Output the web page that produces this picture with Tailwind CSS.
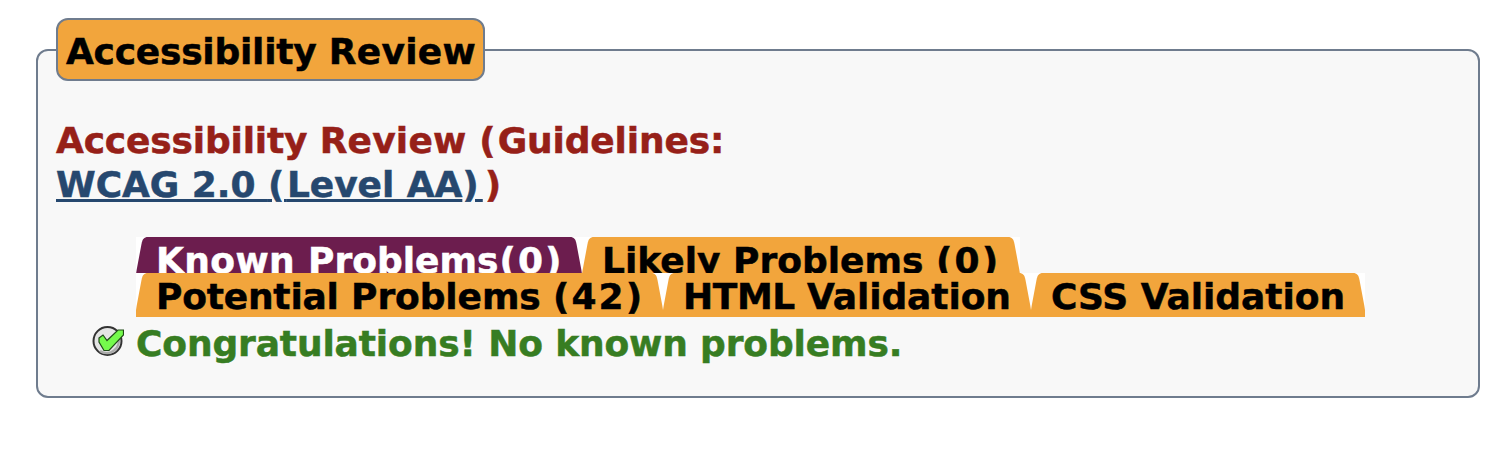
<!DOCTYPE html>
<html lang="en"><head><meta charset="utf-8"><title>Accessibility Review</title>
<script src="https://cdn.jsdelivr.net/npm/@tailwindcss/browser@4"></script></head>
<body class="bg-white font-['DejaVu_Sans',sans-serif] font-bold text-[36px] leading-[44px] [-webkit-text-stroke:0.5px] overflow-hidden whitespace-nowrap h-[454px] pt-[18px] pl-9 pr-1.5">
<svg class="hidden">
  <symbol id="edge" viewBox="0 0 12 44"><path d="M12 0C8 0 6.500 2 5.500 7L.8 32L0 37V44H12Z"/></symbol>
  <symbol id="edge-end" viewBox="0 0 12 44"><path d="M0 0C4 0 5.500 2 6.500 7L11.200 32L12 37V44H0Z"/></symbol>
</svg>
<fieldset class="h-[380px] border-2 border-[#6f7c8e] rounded-xl bg-[#f8f8f8] px-[18px]">
  <legend class="h-[63px] w-[429px] border-2 border-[#6f7c8e] rounded-xl bg-[#f2a53c] text-black pl-2 pt-[10px]"><span class="tracking-[-0.24px]">Accessibility </span><span class="tracking-[0.25px]">Review</span></legend>
  <h2 class="mt-[38px] text-[#962018]"><span class="tracking-[-0.18px]">Accessibility </span><span class="tracking-[0.2px]">Review </span><span class="tracking-[2px]">(</span><span class="tracking-[-0.15px]">Guidelines:</span><br><a href="#" class="text-[#26486f] underline decoration-[3px] underline-offset-[2px] tracking-[-0.05px]">WCAG 2.0 <span class="tracking-[2.5px]">(</span>Level AA<span class="tracking-[4px]">)</span></a><span class="pl-0.5">)</span></h2>
  <ul class="ml-20 mt-[30px] text-black">
    <li class="flex h-9 overflow-hidden">
      <div class="flex h-11 w-[446px] bg-white text-white"><svg class="w-3 h-11 fill-[#6c1d4e]"><use href="#edge"/></svg><span class="bg-[#6c1d4e] w-[422px] pl-[8px] pt-0.5"><span class="tracking-[0.4px]">Known </span>Problems<span class="tracking-[2px] pl-px">(0)</span></span><svg class="w-3 h-11 fill-[#6c1d4e]"><use href="#edge-end"/></svg></div>
      <div class="flex h-11 w-[438px] bg-white"><svg class="w-3 h-11 fill-[#f2a53c]"><use href="#edge"/></svg><span class="bg-[#f2a53c] w-[414px] pl-[8px] pt-0.5">Likely Problems <span class="tracking-[2.2px]">(0)</span></span><svg class="w-3 h-11 fill-[#f2a53c]"><use href="#edge-end"/></svg></div>
    </li>
    <li class="flex h-11 overflow-hidden">
      <div class="flex w-[527px] bg-white"><svg class="w-3 h-11 fill-[#f2a53c]"><use href="#edge"/></svg><span class="bg-[#f2a53c] w-[503px] pl-[8px] pt-0.5"><span class="tracking-[-0.2px]">Potential </span><span class="tracking-[-0.1px]">Problems </span><span class="tracking-[2px]">(42)</span></span><svg class="w-3 h-11 fill-[#f2a53c]"><use href="#edge-end"/></svg></div>
      <div class="flex w-[368px] bg-white"><svg class="w-3 h-11 fill-[#f2a53c]"><use href="#edge"/></svg><span class="bg-[#f2a53c] w-[344px] pl-[8px] pt-0.5"><span class="tracking-[-0.4px]">HTML </span><span class="tracking-[-0.1px]">Validation</span></span><svg class="w-3 h-11 fill-[#f2a53c]"><use href="#edge-end"/></svg></div>
      <div class="flex w-[334px] bg-white"><svg class="w-3 h-11 fill-[#f2a53c]"><use href="#edge"/></svg><span class="bg-[#f2a53c] w-[310px] pl-[8px] pt-0.5 tracking-[-0.05px]">CSS Validation</span><svg class="w-3 h-11 fill-[#f2a53c]"><use href="#edge-end"/></svg></div>
    </li>
  </ul>
  <p class="flex ml-9 mt-[5px] text-[#377d22]">
    <svg class="w-8 h-8 mt-[3px] mr-3 shrink-0" viewBox="0 0 32 32"><circle cx="15.500" cy="16" r="14" fill="#e4e4e4" stroke="#333" stroke-width="2"/><path d="M26 12A12 12 0 0 1 8 26" fill="none" stroke="#aaa" stroke-width="2.500"/><path d="M7 13L11 10L15 15.500L26 5H31.500V10L17 25.500H12L7 17Z" fill="#75fa4c" stroke="#1f4a17" stroke-width="1.200"/></svg>
    <span class="tracking-[-0.13px]">Congratulations! No known problems.</span>
  </p>
</fieldset>
</body></html>
